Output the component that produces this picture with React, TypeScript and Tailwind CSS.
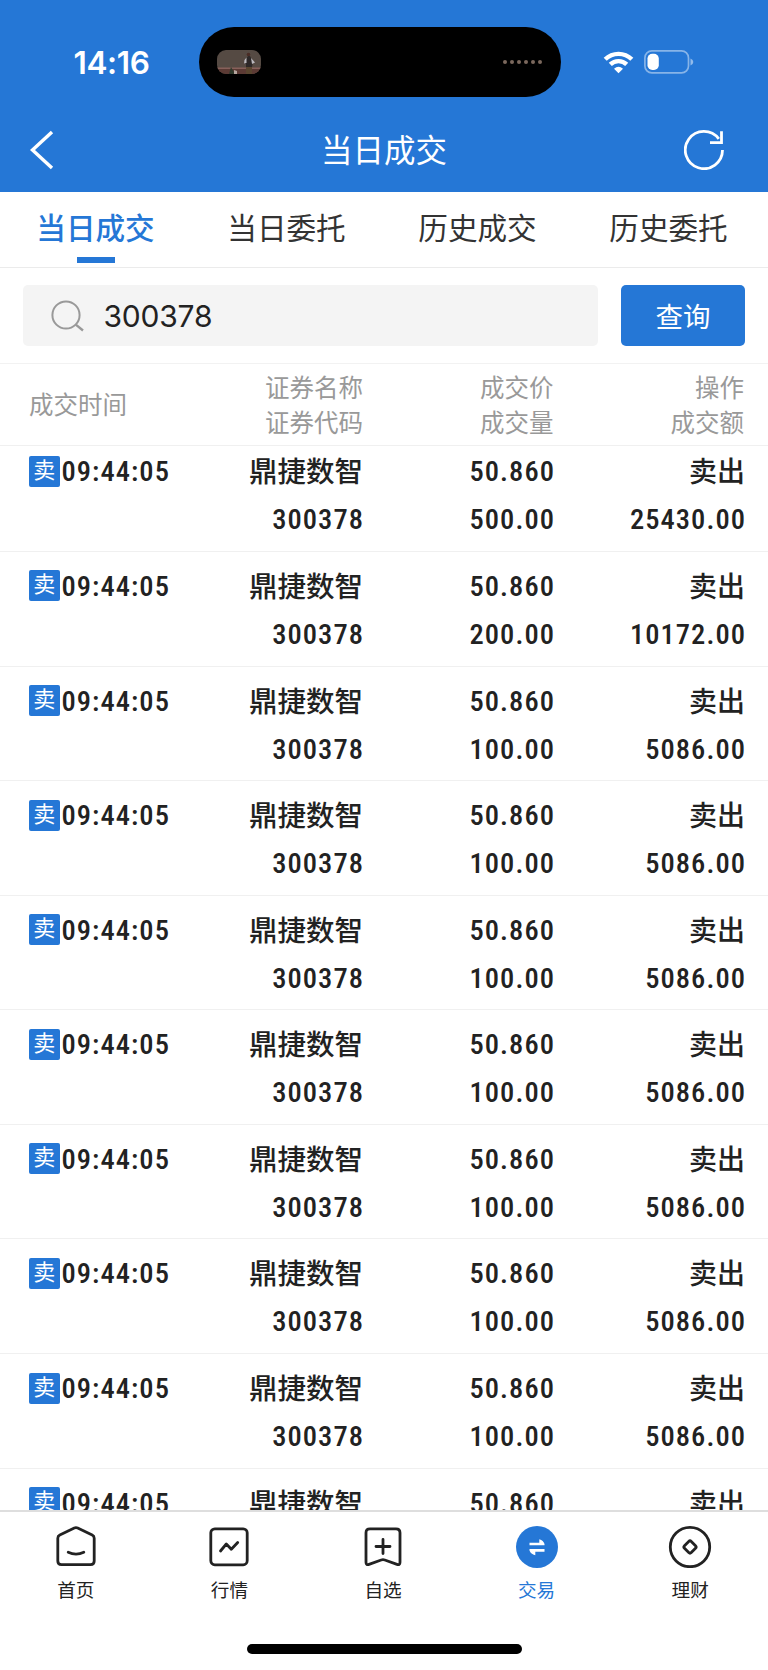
const trades = [
    { volume: "500.00", amount: "25430.00" },
    { volume: "200.00", amount: "10172.00" },
    { volume: "100.00", amount: "5086.00" },
    { volume: "100.00", amount: "5086.00" },
    { volume: "100.00", amount: "5086.00" },
    { volume: "100.00", amount: "5086.00" },
    { volume: "100.00", amount: "5086.00" },
    { volume: "100.00", amount: "5086.00" },
    { volume: "100.00", amount: "5086.00" },
    { volume: "100.00", amount: "5086.00" },
];

const tabs = ["当日成交", "当日委托", "历史成交", "历史委托"];

const HomeIcon = () => (
    <svg width="44" height="44" viewBox="0 0 44 44" fill="none" stroke="#222" strokeWidth="2.8" strokeLinecap="round" strokeLinejoin="round">
        <path d="M20.3 4.1 L5.8 11 Q3.8 12 3.8 14.2 V37 Q3.8 40.7 7.5 40.7 H36.5 Q40.2 40.7 40.2 37 V14.2 Q40.2 12 38.2 11 L23.7 4.1 Q22 3.3 20.3 4.1 Z" />
        <path d="M14.2 28.3 Q22 32 29.8 28.3" />
    </svg>
);

const QuotesIcon = () => (
    <svg width="44" height="44" viewBox="0 0 44 44" fill="none" stroke="#222" strokeWidth="2.8" strokeLinecap="round" strokeLinejoin="round">
        <rect x="3.8" y="4.8" width="36.4" height="36" rx="4" />
        <path d="M13.5 27 L19.3 20 L24.3 25.2 L30.7 18.5" />
    </svg>
);

const WatchlistIcon = () => (
    <svg width="44" height="44" viewBox="0 0 44 44" fill="none" stroke="#222" strokeWidth="2.8" strokeLinecap="round" strokeLinejoin="round">
        <path d="M9 4.8 H35 Q39 4.8 39 8.8 V38.3 Q39 41.5 36 40.4 L23.8 36 Q22 35.4 20.2 36 L8 40.4 Q5 41.5 5 38.3 V8.8 Q5 4.8 9 4.8 Z" />
        <path d="M22 15.5 V29.5 M15 22.5 H29" />
    </svg>
);

const TradeIcon = () => (
    <svg width="44" height="44" viewBox="0 0 44 44" fill="none">
        <circle cx="22" cy="23" r="21" fill="#2577d6" />
        <path d="M14.5 18.7 H24.3 V15.2 Q28.5 16.4 29.5 20 V21.3 H14.5 Z" fill="#fff" />
        <path d="M29.5 27.7 H20.3 V31.2 Q15.8 30 14.5 26.4 V25.1 H29.5 Z" fill="#fff" />
    </svg>
);

const WealthIcon = () => (
    <svg width="44" height="44" viewBox="0 0 44 44" fill="none" stroke="#222" strokeWidth="2.8">
        <circle cx="22" cy="23" r="19.7" />
        <rect x="17.2" y="18.2" width="9.6" height="9.6" rx="1.8" transform="rotate(45 22 23)" />
    </svg>
);

const navItems = [
    { label: "首页", icon: HomeIcon },
    { label: "行情", icon: QuotesIcon },
    { label: "自选", icon: WatchlistIcon },
    { label: "交易", icon: TradeIcon, active: true },
    { label: "理财", icon: WealthIcon },
];

const StatusBar = () => (
    <div className="h-[108px] pt-[27px] flex items-start">
        <div className="w-[199px] h-[70px] pl-[24px] pt-px flex items-center justify-center text-[31.5px] font-semibold tracking-[-0.4px] font-['Inter',sans-serif]">
            14:16
        </div>
        <div className="w-[362px] h-[70px] rounded-full bg-black flex items-center justify-between pl-[18px] pr-[19px]">
            <svg width="44" height="24" viewBox="0 0 44 24">
                <defs>
                    <clipPath id="thumb">
                        <rect width="44" height="24" rx="9" />
                    </clipPath>
                </defs>
                <g clipPath="url(#thumb)">
                    <rect width="44" height="24" fill="#554a43" />
                    <rect y="17.5" width="44" height="1.5" fill="#87605a" />
                    <rect y="19" width="44" height="5" fill="#5b3a34" />
                    <path d="M29 9 L31 6 H33 L36 12 L35 17 H29 V14 L27 13 Z" fill="#2d2828" />
                    <path d="M29 17 H35 V24 H29 Z" fill="#5a4630" />
                    <path d="M27.5 10 L29.5 7.5 V13 L27 13.5 Z M34 8 L38 12.5 L35 14 Z" fill="#bbb8bd" />
                    <circle cx="31.5" cy="4.5" r="1.8" fill="#4a2c25" />
                    <path d="M12 24 L14 17 L18 24 Z" fill="#2f3a2c" />
                    <path d="M17 20 L20 21 V24 H17 Z" fill="#b5a59e" />
                </g>
            </svg>
            <div className="flex gap-[3px]">
                {[0, 1, 2, 3, 4, 5].map(i => (
                    <span key={i} className="w-1 h-1 rounded-full bg-[#7b685d]" />
                ))}
            </div>
        </div>
        <div className="h-[70px] pl-[42px] flex items-center gap-[10px]">
            <svg width="31" height="24" viewBox="0 0 31 24" fill="none" stroke="#fff" strokeWidth="4.4">
                <path d="M2.2 9.3 A19 19 0 0 1 28.8 9.3" />
                <path d="M7.3 14.4 A11.8 11.8 0 0 1 23.7 14.4" />
                <path d="M15.5 23.3 L11 18.7 Q15.5 15 20 18.7 Z" fill="#fff" stroke="none" />
            </svg>
            <svg width="51" height="24" viewBox="0 0 51 24" fill="none">
                <rect x="0.9" y="0.9" width="43.6" height="22" rx="7" stroke="#fff" strokeOpacity="0.45" strokeWidth="1.7" />
                <rect x="3.5" y="3.8" width="11.3" height="16.2" rx="4.8" fill="#fff" />
                <path d="M46.5 8.6 Q49.3 9.8 49.3 12 Q49.3 14.2 46.5 15.4 Z" fill="#fff" fillOpacity="0.5" />
            </svg>
        </div>
    </div>
);

const TitleBar = () => (
    <div className="h-[84px] pl-[28px] pr-[44px] flex items-center">
        <svg width="40" height="40" viewBox="0 0 40 40" fill="none" stroke="#fff" strokeWidth="3.4">
            <path d="M24 2 L4.5 20 L24 38" />
        </svg>
        <h1 className="flex-1 pl-[16px] pb-[2px] text-center text-[31.5px] leading-none">当日成交</h1>
        <svg width="40" height="40" viewBox="0 0 40 40" fill="none" stroke="#fff" strokeWidth="2.8">
            <path d="M38.5 20 A18.6 18.6 0 1 1 34.8 8.9" />
            <path d="M37.5 1.2 V12.7 H26" />
        </svg>
    </div>
);

export default function App() {
    return (
        <div className="w-[768px] h-[1670px] overflow-hidden bg-white flex flex-col text-[#222] font-['Noto_Sans_CJK_SC',sans-serif]">
            <header className="bg-[#2577d6] text-white shrink-0">
                <StatusBar />
                <TitleBar />
            </header>

            <nav className="h-[76px] shrink-0 flex border-b border-[#ebebeb]">
                {tabs.map((tab, i) => (
                    <div key={tab} className="w-[191px] flex flex-col items-center pt-[14px]">
                        <span className={i === 0 ? "h-[51px] leading-[42px] text-[29.6px] font-medium text-[#2577d6]" : "h-[51px] leading-[42px] text-[29.6px] text-[#333]"}>{tab}</span>
                        {i === 0 && <span className="w-[38px] h-[6px] bg-[#2577d6]" />}
                    </div>
                ))}
            </nav>

            <div className="h-[96px] shrink-0 px-[23px] pt-[17px] flex gap-[23px] border-b border-[#f2f2f2]">
                <div className="w-[575px] h-[61px] rounded-[5px] bg-[#f4f4f4] flex items-center pl-[28px]">
                    <svg width="34" height="34" viewBox="0 0 34 34" fill="none" stroke="#999" strokeWidth="2">
                        <circle cx="15" cy="16" r="13.6" />
                        <path d="M24.8 25.6 L32 31.5" strokeWidth="2.4" />
                    </svg>
                    <span className="ml-[18.5px] pt-[2px] text-[30px] tracking-[-0.2px] font-['Inter',sans-serif]">300378</span>
                </div>
                <button className="w-[124px] h-[61px] rounded-[5px] bg-[#2577d6] text-white text-[27.5px] leading-none">查询</button>
            </div>

            <div className="h-[82px] shrink-0 pb-px grid grid-cols-[191px_143px_190.5px_190.5px] pl-[29px] items-center text-right text-[24.5px] leading-[35px] text-[#999] border-b border-[#f0f0f0]">
                <span className="text-left pb-px">成交时间</span>
                <span>证券名称<br />证券代码</span>
                <span>成交价<br />成交量</span>
                <span>操作<br />成交额</span>
            </div>

            {/* the list is scrolled a little, so its first row starts under the column heads */}
            <main className="h-[1064px] shrink-0 overflow-hidden">
                <div className="-mt-[8.7px]">
                    {trades.map((trade, i) => (
                        <div key={i} className="h-[114.6px] border-b border-[#f0f0f0] pt-[11px] pl-[29px] grid grid-cols-[191px_143px_191px_191px] grid-rows-[48px_48px] items-center text-right text-[28.5px] font-medium leading-[48px] tracking-[1.05px] [font-stretch:75%] font-['Roboto','Noto_Sans_CJK_SC',sans-serif]">
                            <div className="flex items-center">
                                <span className="w-[30.5px] h-[31px] mr-[2px] mb-[2px] rounded-[2px] bg-[#2577d6] text-white text-center text-[22px] leading-[30px] tracking-normal font-normal">卖</span>
                                09:44:05
                            </div>
                            <span className="pt-[2px] tracking-normal">鼎捷数智</span>
                            <span className="-mr-px">50.860</span>
                            <span className="pt-[2px] text-[28px] tracking-normal">卖出</span>
                            <span className="col-start-2 -mr-px">300378</span>
                            <span className="-mr-px">{trade.volume}</span>
                            <span className="-mr-px">{trade.amount}</span>
                        </div>
                    ))}
                </div>
            </main>

            <footer className="flex-1 border-t-2 border-[#dedede] flex flex-col items-center">
                <div className="self-start -ml-px w-[768px] grid grid-cols-5 pt-[12px]">
                    {navItems.map(({ label, icon: Icon, active }) => (
                        <div key={label} className="flex flex-col items-center">
                            <Icon />
                            <span className={active ? "mt-[8px] text-[18.6px] leading-[26px] text-[#2577d6]" : "mt-[8px] text-[18.6px] leading-[26px]"}>{label}</span>
                        </div>
                    ))}
                </div>
                <div className="mt-[42px] w-[275px] h-[10px] rounded-full bg-black" />
            </footer>
        </div>
    );
}
